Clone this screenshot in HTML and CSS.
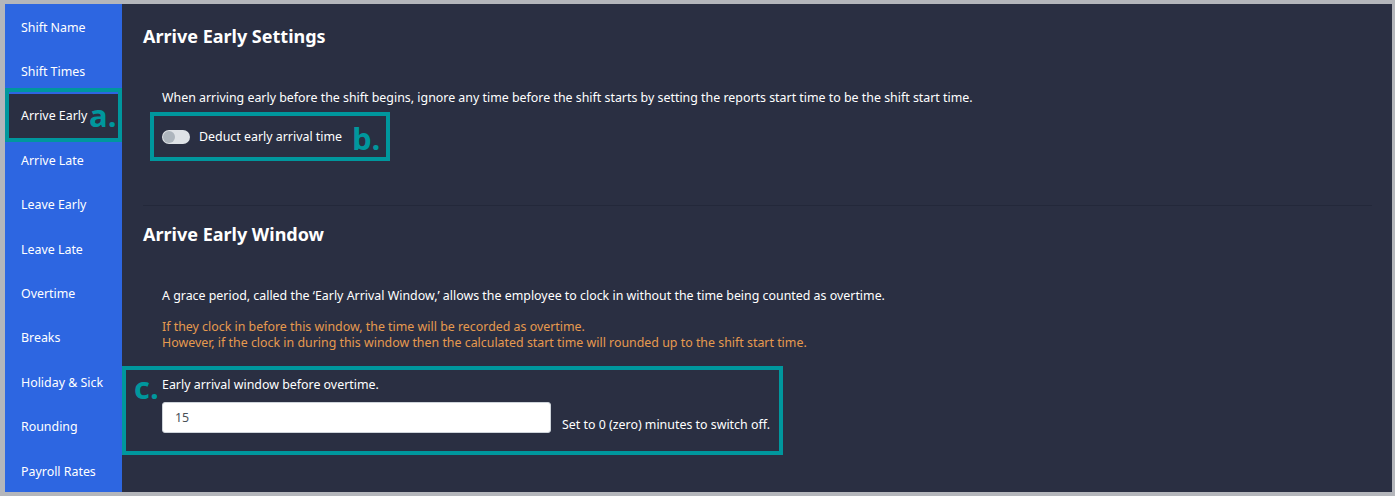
FILE: index.html
```html
<!DOCTYPE html>
<html lang="en">
<head>
<meta charset="utf-8">
<title>Arrive Early Settings</title>
<link rel="stylesheet" href="styles.css">
</head>
<body>
<div class="frame">
  <div class="app">
    <nav class="sidebar">
      <div class="nav-item">Shift Name</div>
      <div class="nav-item">Shift Times</div>
      <div class="nav-item active">Arrive Early<span class="mark mark-a">a.</span></div>
      <div class="nav-item">Arrive Late</div>
      <div class="nav-item">Leave Early</div>
      <div class="nav-item">Leave Late</div>
      <div class="nav-item">Overtime</div>
      <div class="nav-item">Breaks</div>
      <div class="nav-item">Holiday &amp; Sick</div>
      <div class="nav-item">Rounding</div>
      <div class="nav-item">Payroll Rates</div>
    </nav>
    <main class="main">
      <section class="section first">
        <h2 class="title">Arrive Early Settings</h2>
        <p class="text intro">When arriving early before the shift begins, ignore any time before the shift starts by setting the reports start time to be the shift start time.</p>
        <div class="switch-row">
          <span class="switch"><span class="knob"></span></span>
          <span class="switch-label">Deduct early arrival time</span>
          <span class="mark mark-b">b.</span>
        </div>
      </section>
      <hr class="divider">
      <section class="section second">
        <h2 class="title">Arrive Early Window</h2>
        <p class="text intro2">A grace period, called the ‘Early Arrival Window,’ allows the employee to clock in without the time being counted as overtime.</p>
        <p class="text warn">If they clock in before this window, the time will be recorded as overtime.<br>However, if the clock in during this window then the calculated start time will rounded up to the shift start time.</p>
        <div class="field">
          <span class="mark mark-c">c.</span>
          <label class="text field-label">Early arrival window before overtime.</label>
          <div class="field-row">
            <div class="input">15</div>
            <span class="text hint">Set to 0 (zero) minutes to switch off.</span>
          </div>
        </div>
      </section>
    </main>
  </div>
</div>
</body>
</html>
```

FILE: styles.css
```css
html, body {
  margin: 0;
  padding: 0;
  background: #b4b6bb;
}
body {
  font-family: "Noto Sans", "Open Sans", sans-serif;
  color: #ffffff;
  width: 1395px;
  height: 496px;
  overflow: hidden;
}
.frame {
  padding: 4px 3px 4px 5px;
  height: 488px;
}
.app {
  display: flex;
  height: 488px;
  background: #2a2f42;
}
.sidebar {
  width: 117px;
  flex: none;
  background: #2d66e1;
  display: flex;
  flex-direction: column;
  padding-top: 1px;
  box-sizing: border-box;
  overflow: hidden;
}
.nav-item {
  position: relative;
  flex: none;
  height: 44.4px;
  display: flex;
  align-items: center;
  padding-left: 16px;
  font-size: 12.4px;
  color: #ffffff;
}
.nav-item.active {
  background: #2a2f42;
}
.nav-item.active::after {
  content: "";
  position: absolute;
  left: 0;
  right: 0;
  top: -6px;
  bottom: -4px;
  border: 4px solid #00979d;
}
.mark {
  color: #00979d;
  font-family: "Open Sans", "Noto Sans", sans-serif;
  font-weight: 700;
  font-size: 31px;
  line-height: 1;
}
.mark-a {
  position: absolute;
  left: 84px;
  top: 6px;
}
.main {
  flex: 1;
  padding: 20px 20px 0 21px;
  min-width: 0;
}
.title {
  margin: 0;
  font-size: 18px;
  font-weight: 700;
  line-height: 24px;
}
.text {
  font-size: 12.4px;
  line-height: 16px;
  margin: 0;
}
.intro {
  margin: 42px 0 0 19px;
}
.switch-row {
  position: relative;
  display: flex;
  align-items: center;
  margin: 6px 0 0 7px;
  width: 224px;
  height: 41px;
  border: 4px solid #00979d;
  box-sizing: content-box;
  padding-left: 8px;
}
.switch {
  width: 28px;
  height: 14px;
  border-radius: 7px;
  background: #dee2e6;
  display: flex;
  align-items: center;
  padding-left: 1px;
  box-sizing: border-box;
}
.knob {
  width: 12px;
  height: 12px;
  border-radius: 50%;
  background: #adb5bd;
}
.switch-label {
  font-size: 12.4px;
  margin-left: 9px;
}
.mark-b {
  position: absolute;
  left: 198px;
  top: 7px;
}
.divider {
  border: 0;
  height: 1px;
  background: #23283a;
  margin: 44px 0 0 0;
}
.second .title {
  margin-top: 16px;
}
.intro2 {
  margin: 42px 0 0 19px;
}
.warn {
  color: #e69a4f;
  margin: 15px 0 0 19px;
}
.field {
  position: relative;
  margin: 15px 0 0 -21px;
  width: 653px;
  height: 81px;
  border: 4px solid #00979d;
  box-sizing: content-box;
}
.mark-c {
  position: absolute;
  left: 8px;
  top: 2px;
}
.field-label {
  display: block;
  margin: 7px 0 0 36px;
}
.field-row {
  display: flex;
  align-items: flex-end;
  margin: 9px 0 0 36px;
}
.input {
  width: 389px;
  height: 31px;
  box-sizing: border-box;
  background: #ffffff;
  border: 1px solid #ced4da;
  border-radius: 3px;
  color: #495057;
  font-size: 12.4px;
  line-height: 29px;
  padding-left: 12px;
}
.hint {
  margin-left: 11px;
}
```
